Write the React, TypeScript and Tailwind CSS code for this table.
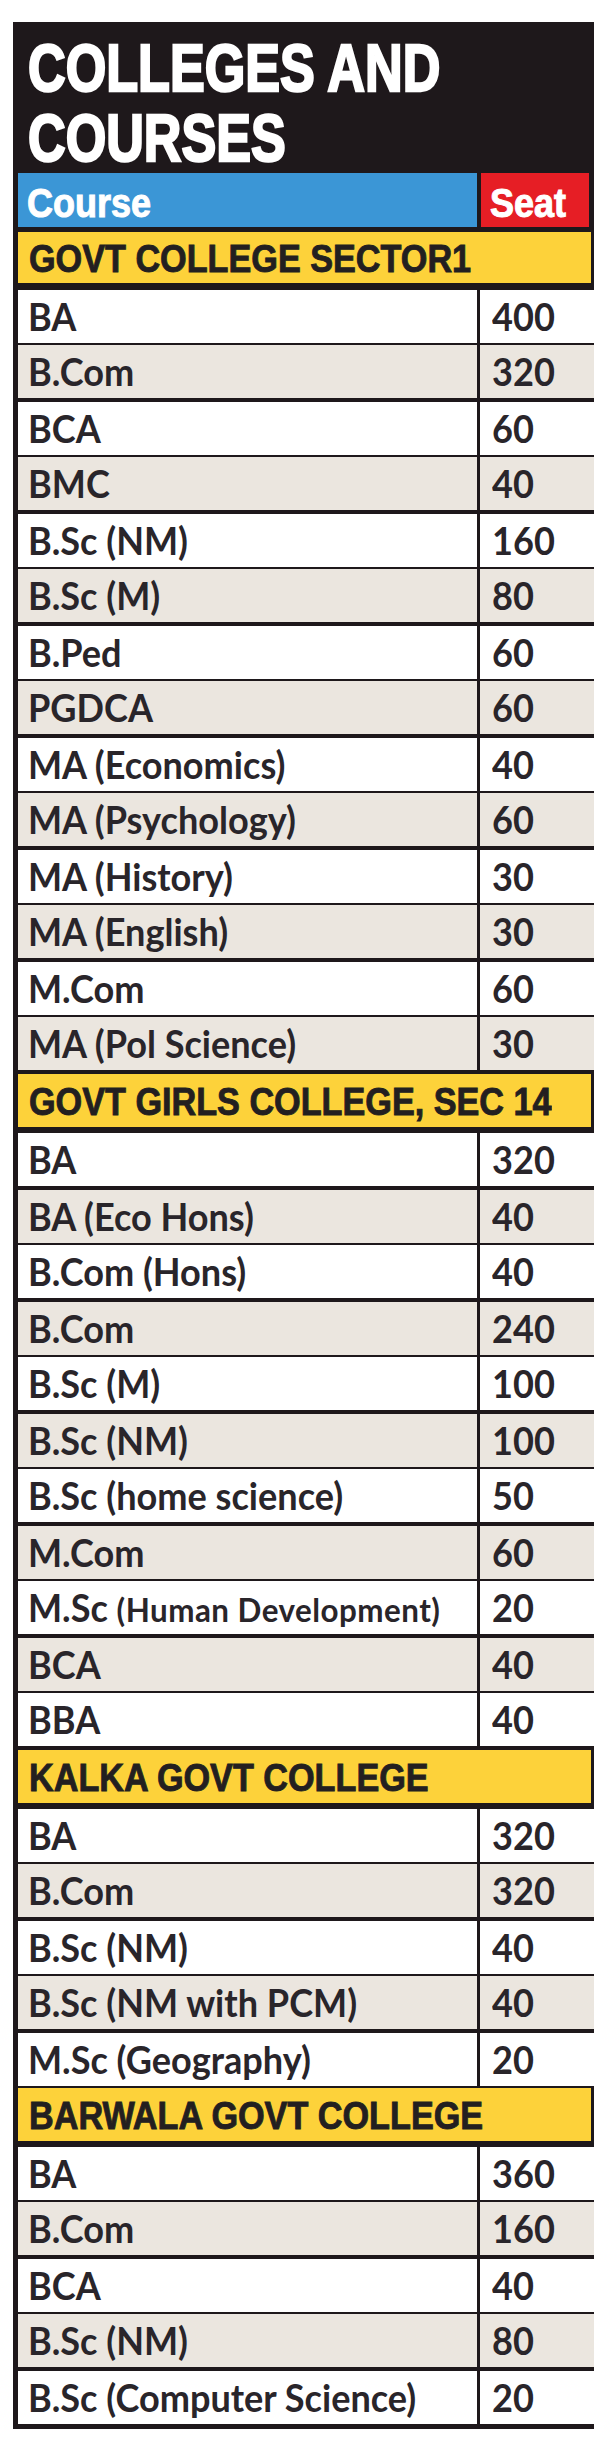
import React from "react";

type Row = { c: string; s: string; small?: string };
type Section = { title: string; rows: Row[]; pattern: "a" | "b" };

const sections: Section[] = [
  {
    title: "GOVT COLLEGE SECTOR1",
    pattern: "a",
    rows: [
      { c: "BA", s: "400" },
      { c: "B.Com", s: "320" },
      { c: "BCA", s: "60" },
      { c: "BMC", s: "40" },
      { c: "B.Sc (NM)", s: "160" },
      { c: "B.Sc (M)", s: "80" },
      { c: "B.Ped", s: "60" },
      { c: "PGDCA", s: "60" },
      { c: "MA (Economics)", s: "40" },
      { c: "MA (Psychology)", s: "60" },
      { c: "MA (History)", s: "30" },
      { c: "MA (English)", s: "30" },
      { c: "M.Com", s: "60" },
      { c: "MA (Pol Science)", s: "30" },
    ],
  },
  {
    title: "GOVT GIRLS COLLEGE, SEC 14",
    pattern: "b",
    rows: [
      { c: "BA", s: "320" },
      { c: "BA (Eco Hons)", s: "40" },
      { c: "B.Com (Hons)", s: "40" },
      { c: "B.Com", s: "240" },
      { c: "B.Sc (M)", s: "100" },
      { c: "B.Sc (NM)", s: "100" },
      { c: "B.Sc (home science)", s: "50" },
      { c: "M.Com", s: "60" },
      { c: "M.Sc ", small: "(Human Development)", s: "20" },
      { c: "BCA", s: "40" },
      { c: "BBA", s: "40" },
    ],
  },
  {
    title: "KALKA GOVT COLLEGE",
    pattern: "a",
    rows: [
      { c: "BA", s: "320" },
      { c: "B.Com", s: "320" },
      { c: "B.Sc (NM)", s: "40" },
      { c: "B.Sc (NM with PCM)", s: "40" },
      { c: "M.Sc (Geography)", s: "20" },
    ],
  },
  {
    title: "BARWALA GOVT COLLEGE",
    pattern: "a",
    rows: [
      { c: "BA", s: "360" },
      { c: "B.Com", s: "160" },
      { c: "BCA", s: "40" },
      { c: "B.Sc (NM)", s: "80" },
      { c: "B.Sc (Computer Science)", s: "20" },
    ],
  },
];

const rowFont = { fontFamily: "Lato, 'Liberation Sans', sans-serif" };
const headFont = { fontFamily: "'Liberation Sans', Arial, sans-serif" };

function DataRow({ r, i, pattern }: { r: Row; i: number; pattern: "a" | "b" }) {
  const gray = i % 2 === 1;
  const thick = pattern === "a" ? gray : !gray;
  const bg = gray ? "bg-[#ebe6df]" : "bg-white";
  return (
    <div className={`flex gap-[3px] ${thick ? "mb-[4px]" : "mb-[2px]"}`}>
      <div
        className={`${bg} w-[459px] h-[53px] flex items-center pl-[10px] text-[38px] font-bold text-[#29252a] whitespace-nowrap`}
        style={rowFont}
      >
        <span className="inline-block scale-x-95 origin-left">
          {r.c}
          {r.small && <span className="text-[33px] tracking-[0.5px]">{r.small}</span>}
        </span>
      </div>
      <div
        className={`${bg} flex-1 h-[53px] flex items-center pl-[12px] text-[38px] font-bold text-[#29252a]`}
        style={rowFont}
      >
        <span className="inline-block scale-x-95 origin-left">{r.s}</span>
      </div>
    </div>
  );
}

export default function App() {
  return (
    <div className="min-h-[2458px] bg-white pt-[22px] pl-[13px]">
      <div className="w-[581px] bg-[#1e181b] pl-[5px] pb-[3px]">
        {/* Title */}
        <div className="h-[151px] pt-[11px] pl-[10px]" style={headFont}>
          <div className="origin-left scale-x-[0.79] text-white font-bold text-[66px] leading-[70px] whitespace-nowrap [-webkit-text-stroke:2.5px_white]">
            <div>COLLEGES AND</div>
            <div>COURSES</div>
          </div>
        </div>
        {/* Header */}
        <div className="flex h-[54px] pr-[5px] gap-[4px]" style={headFont}>
          <div className="w-[459px] bg-[#3b96d6] flex items-center pt-[6px] pl-[9px]">
            <span className="inline-block origin-left scale-x-90 text-white font-bold text-[40px] leading-none [-webkit-text-stroke:1px_white]">
              Course
            </span>
          </div>
          <div className="flex-1 bg-[#e61e25] flex items-center pt-[6px] pl-[9px]">
            <span className="inline-block origin-left scale-x-90 text-white font-bold text-[40px] leading-none [-webkit-text-stroke:1px_white]">
              Seat
            </span>
          </div>
        </div>
        {sections.map((sec, si) => (
          <div key={si}>
            <div
              className={`${si === 0 ? "mt-[5px] h-[51px] mb-[7px]" : "mt-[2px] h-[53px] mb-[6px]"} mr-[3px] bg-[#fdd23a] flex items-center pl-[11px] whitespace-nowrap`}
              style={headFont}
            >
              <span className="inline-block origin-left scale-x-90 text-[#231f20] font-bold text-[38px] leading-none pt-[2px] [-webkit-text-stroke:0.9px_#231f20]">
                {sec.title}
              </span>
            </div>
            {sec.rows.map((r, i) => (
              <DataRow key={i} r={r} i={i} pattern={sec.pattern} />
            ))}
          </div>
        ))}
      </div>
    </div>
  );
}
